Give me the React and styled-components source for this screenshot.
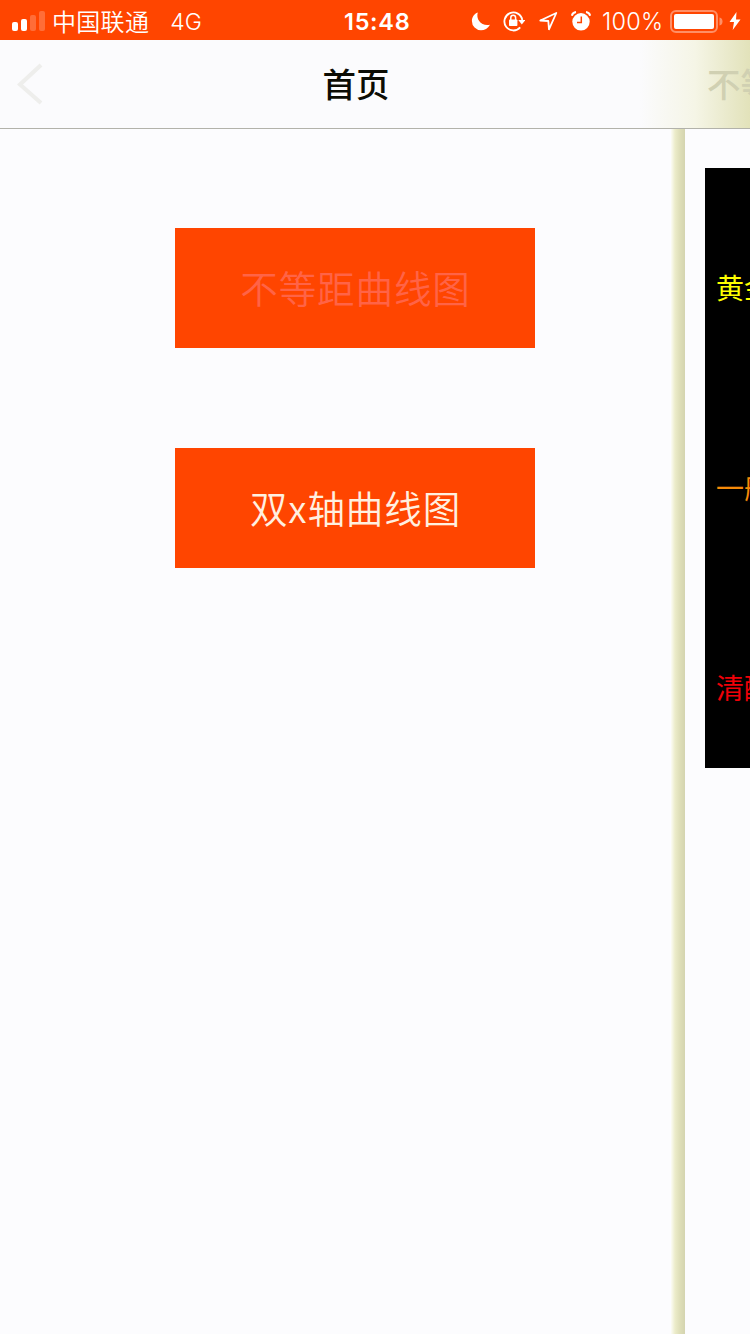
import React from 'react';
import styled, { createGlobalStyle } from 'styled-components';

const GlobalStyle = createGlobalStyle`
  * { box-sizing: border-box; }
  body {
    margin: 0;
    background: #fcfcfe;
    font-family: Inter, "Noto Sans CJK SC", sans-serif;
    overflow: hidden;
  }
`;

const Screen = styled.div`
  width: 750px;
  height: 1334px;
  display: flex;
  flex-direction: column;
  overflow: hidden;
  background: #fcfcfe;
`;

const StatusBar = styled.header`
  height: 40px;
  flex: none;
  display: grid;
  grid-template-columns: 344px 127px 1fr;
  align-items: center;
  background: #ff4500;
  color: #fff;
  font-size: 24px;
  line-height: 40px;
  white-space: nowrap;
`;

const Carrier = styled.div`
  display: flex;
  align-items: center;
  padding-left: 12px;
`;

const Signal = styled.div`
  display: flex;
  align-items: flex-end;
  gap: 3px;
  width: 34px;
  height: 20px;
  margin-right: 6px;
`;

const Bar = styled.span`
  width: 6px;
  height: ${({ $height }) => $height}px;
  border-radius: 2px;
  background: ${({ $on }) => ($on ? '#fff' : 'rgba(255, 255, 255, 0.22)')};
`;

const CarrierName = styled.span`
  letter-spacing: 0.3px;
  font-weight: 350;
  margin-right: 21px;
  font-family: "Noto Sans CJK SC", sans-serif;
`;

const Network = styled.span`
  padding-top: 2px;
  font-size: 23px;
  font-weight: 350;
`;

const Clock = styled.time`
  padding-top: 2px;
  font-size: 23.5px;
  font-weight: 600;
  letter-spacing: 0.7px;
`;

const Indicators = styled.div`
  display: flex;
  align-items: center;
  height: 40px;
`;

const Glyph = styled.svg`
  flex: none;
  display: block;
  margin-right: ${({ $after }) => $after}px;
`;

const Percent = styled.span`
  width: 68px;
  padding-top: 2px;
  font-size: 23.5px;
  font-weight: 350;
  letter-spacing: 0.2px;
`;

const NavBar = styled.nav`
  height: 89px;
  flex: none;
  display: grid;
  grid-template-columns: 60px 592px 98px;
  align-items: center;
  border-bottom: 1px solid #b2b2aa;
  background: linear-gradient(to right, #fbfbfd 0 640px, #f5f5e6 695px, #e2e2ba 750px);
`;

const BackIcon = styled.svg`
  margin-left: 16px;
`;

const Title = styled.h1`
  margin: 0;
  padding-bottom: 3px;
  text-align: center;
  font-size: 33.5px;
  line-height: 48px;
  font-weight: 500;
  color: #0c0c04;
  font-family: "Noto Sans CJK SC", sans-serif;
`;

const NextTitle = styled.span`
  padding: 0 0 3px 55px;
  width: 98px;
  overflow: hidden;
  white-space: nowrap;
  font-size: 33.5px;
  line-height: 48px;
  font-weight: 500;
  color: #d0d0b2;
  font-family: "Noto Sans CJK SC", sans-serif;
`;

const Pages = styled.main`
  flex: 1;
  display: flex;
  overflow: hidden;
`;

const HomePage = styled.section`
  width: 671px;
  flex: none;
  display: flex;
  flex-direction: column;
  gap: 100px;
  padding: 99px 0 0 175px;
`;

const MenuButton = styled.button`
  width: 360px;
  height: 120px;
  padding: 0 0 4px 1px;
  border: 0;
  background: #ff4500;
  color: ${({ $pressed }) => ($pressed ? '#ff6347' : '#fff0e0')};
  font-family: "Noto Sans CJK SC", sans-serif;
  font-size: 37.5px;
  font-weight: 350;
  letter-spacing: 0.9px;
  white-space: nowrap;
`;

const EdgeShadow = styled.div`
  width: 14px;
  flex: none;
  background: linear-gradient(to right, #fcfcf6, #ececca 4px, #dedeb8 9px, #d4d4b0);
`;

const ChartPage = styled.section`
  flex: 1;
  min-width: 0;
  padding: 39px 0 0 20px;
  overflow: hidden;
`;

const Chart = styled.div`
  height: 600px;
  padding: 99px 0 0 11px;
  background: #000;
  overflow: hidden;
`;

const Level = styled.div`
  height: 200px;
  line-height: 40px;
  font-family: "Noto Sans CJK SC", sans-serif;
  font-size: 28px;
  white-space: nowrap;
  color: ${({ $color }) => $color};
`;

const levels = [
  { name: '黄金', color: '#ffff00' },
  { name: '一般', color: '#f58a08' },
  { name: '清醒', color: '#f00008' },
];

export default function App() {
  return (
    <Screen>
      <GlobalStyle />
      <StatusBar>
        <Carrier>
          <Signal>
            <Bar $height={9} $on />
            <Bar $height={12} $on />
            <Bar $height={16} />
            <Bar $height={20} />
          </Signal>
          <CarrierName>中国联通</CarrierName>
          <Network>4G</Network>
        </Carrier>
        <Clock>15:48</Clock>
        <Indicators>
          <Glyph $after={12} width="20" height="20" viewBox="0 0 20 20">
            <path d="M6.8 1.5C4.6 8.5 10.5 15.5 19 13.7 16.8 17.4 13.6 19.2 10 19.2A9.2 9.2 0 0 1 .9 10C.9 6 3.2 2.8 6.8 1.5Z" fill="#fff" />
          </Glyph>
          <Glyph $after={14} width="22" height="22" viewBox="0 0 22 22" fill="none" stroke="#fff" strokeWidth="1.8">
            <path d="M17.2 17.4A9 9 0 1 1 19.3 10" />
            <path d="M15.3 10h7l-3.5 4.5Z" fill="#fff" stroke="none" />
            <rect x="6" y="9.5" width="8.4" height="6.5" rx="0.8" fill="#fff" stroke="none" />
            <path d="M7.8 10V7.7a2.4 2.4 0 0 1 4.8 0V10" strokeWidth="1.5" />
          </Glyph>
          <Glyph $after={13} width="19" height="20" viewBox="0 0 19 20">
            <path d="M1.3 9.5 17.3 2 10 18.3 9.3 10Z" fill="none" stroke="#fff" strokeWidth="1.8" strokeLinejoin="round" />
          </Glyph>
          <Glyph $after={11} width="20" height="20" viewBox="0 0 20 20">
            <circle cx="10" cy="10.8" r="8.7" fill="#fff" />
            <path d="M0.8 4.7A5 5 0 0 1 5 1M15 1a5 5 0 0 1 4.2 3.7" fill="none" stroke="#fff" strokeWidth="2" />
            <path d="M10.3 5.5v6H6" fill="none" stroke="#ff4500" strokeWidth="1.5" />
          </Glyph>
          <Percent>100%</Percent>
          <Glyph $after={6} width="53" height="24" viewBox="0 0 53 24">
            <rect x="1" y="2" width="46" height="21" rx="5" fill="none" stroke="#fff" strokeOpacity="0.4" strokeWidth="2" />
            <rect x="4" y="5" width="40" height="15" rx="2" fill="#fff" />
            <path d="M49.5 8.5q3 .5 3 4t-3 4Z" fill="#fff" fillOpacity="0.4" />
          </Glyph>
          <Glyph $after={0} width="12" height="20" viewBox="0 0 12 20">
            <path d="M7.5 1 0.5 11H5L3.7 19 11.5 8.5H7Z" fill="#fff" />
          </Glyph>
        </Indicators>
      </StatusBar>
      <NavBar>
        <BackIcon width="28" height="44" viewBox="0 0 28 44">
          <path d="M25 3 4 22.5 25 41" fill="none" stroke="#eeeeec" strokeWidth="4" />
        </BackIcon>
        <Title>首页</Title>
        <NextTitle>不等距</NextTitle>
      </NavBar>
      <Pages>
        <HomePage>
          <MenuButton $pressed>不等距曲线图</MenuButton>
          <MenuButton>双x轴曲线图</MenuButton>
        </HomePage>
        <EdgeShadow />
        <ChartPage>
          <Chart>
            {levels.map((level) => (
              <Level key={level.name} $color={level.color}>{level.name}</Level>
            ))}
          </Chart>
        </ChartPage>
      </Pages>
    </Screen>
  );
}
